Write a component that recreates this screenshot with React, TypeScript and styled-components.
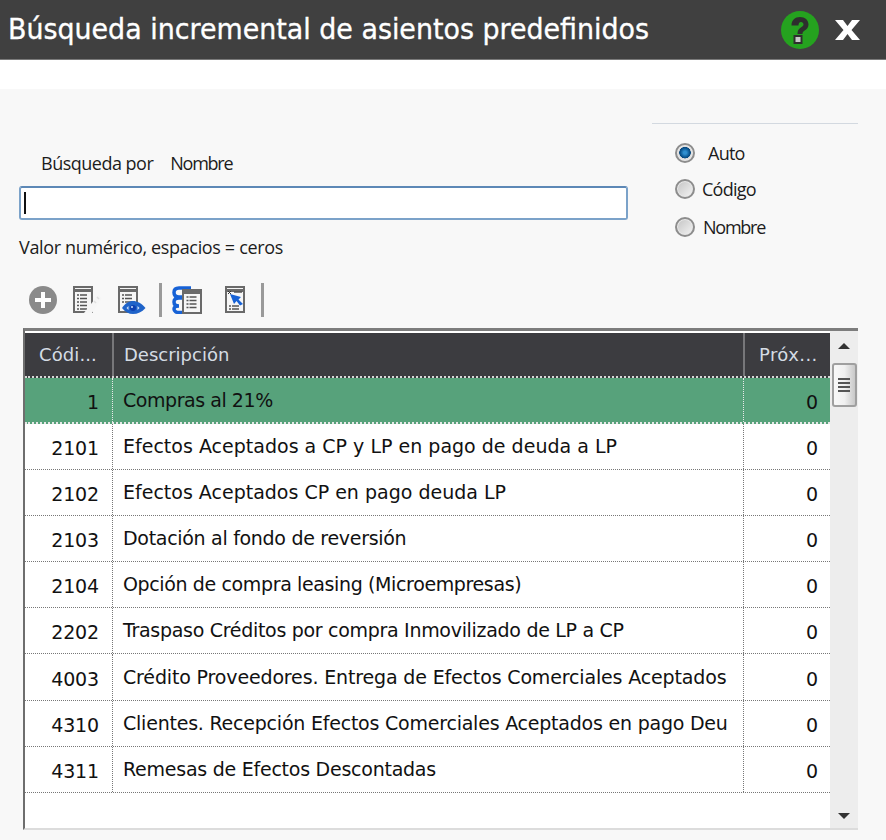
import React from 'react';
import styled, { createGlobalStyle } from 'styled-components';

const Global = createGlobalStyle`
  html, body { margin: 0; padding: 0; background: #fff; }
  * { box-sizing: border-box; }
  #root { width: 886px; height: 840px; overflow: hidden; }
`;

const Page = styled.div`
  width: 886px;
  height: 840px;
  display: flex;
  flex-direction: column;
  background: #fff;
`;

const TitleBar = styled.header`
  height: 60px;
  flex: none;
  display: flex;
  align-items: center;
  justify-content: space-between;
  padding: 0 26px 0 8px;
  background: #404040;
  border-bottom: 1px solid #7a7a7a;
`;

const Title = styled.h1`
  margin: 0;
  padding-top: 1px;
  font: 400 28px/1 "DejaVu Sans", sans-serif;
  -webkit-text-stroke: 0.35px #fff;
  color: #fff;
  transform: scaleX(0.96);
  transform-origin: left center;
  white-space: nowrap;
`;

const TitleActions = styled.div`
  display: flex;
  align-items: center;
  gap: 16px;
`;

const Panel = styled.main`
  margin-top: 29px;
  flex: 1;
  background: #f8f8f8;
  padding: 34px 28px 0 19px;
  display: flex;
  flex-direction: column;
`;

const TopRow = styled.section`
  display: flex;
  justify-content: space-between;
  height: 165px;
`;

const SearchColumn = styled.div`
  width: 609px;
  padding-top: 29px;
`;

const SearchLabels = styled.div`
  display: flex;
  gap: 17px;
  padding-left: 22px;
  height: 22px;
  align-items: center;
`;

const Label = styled.span<{ $ls?: number }>`
  font: 400 18px/22px "Open Sans", sans-serif;
  letter-spacing: ${(p) => p.$ls ?? -0.75}px;
  color: #1c1c1c;
  white-space: nowrap;
`;

const SearchBox = styled.div`
  margin-top: 12px;
  height: 34px;
  background: #fff;
  border: 2px solid #7ba2c9;
  border-top-color: #5d88b6;
  border-radius: 3px;
  display: flex;
  align-items: center;
  padding-left: 3px;
`;

const Caret = styled.span`
  width: 2px;
  height: 22px;
  background: #111;
`;

const Hint = styled(Label)`
  display: block;
  margin-top: 16px;
`;

const ModeGroup = styled.fieldset`
  margin: 0;
  padding: 17px 0 0 23px;
  width: 206px;
  border: 0;
  border-top: 1px solid #d3d9e0;
  display: flex;
  flex-direction: column;
`;

const ModeOption = styled.label<{ $gap: number; $after: number }>`
  display: flex;
  align-items: center;
  gap: ${(p) => p.$gap}px;
  height: 24px;
  margin-bottom: ${(p) => p.$after}px;
`;

const RadioDot = styled.span<{ $checked?: boolean }>`
  width: 20px;
  height: 20px;
  flex: none;
  border-radius: 50%;
  border: 2px solid #8d8d8d;
  box-shadow: inset 0 0 0 1px #e8e8e8;
  background: ${(p) =>
    p.$checked
      ? 'radial-gradient(circle at 50% 48%, #2f8fd0 0 1.5px, #0a5590 4.5px, #0a4a80 5.5px, #dcdcdc 6px, #f0f0f0 100%)'
      : 'linear-gradient(135deg, #c4c4c4, #f4f4f4)'};
`;

const Toolbar = styled.div`
  height: 40px;
  margin-top: -8px;
  padding-left: 10px;
  display: flex;
  align-items: center;
`;

const ToolIcon = styled.span<{ $w: number }>`
  width: ${(p) => p.$w}px;
  height: 34px;
  display: flex;
  align-items: center;
  justify-content: center;
  flex: none;
  & > svg { flex: none; }
`;

const ToolDivider = styled.span`
  width: 3px;
  height: 34px;
  background: #9a9a9a;
  flex: none;
`;

const GridFrame = styled.div`
  margin: 8px 0 0 4px;
  width: 835px;
  height: 502px;
  display: flex;
  border: 2px solid #6e6e6e;
  border-top: 3px solid #7d7d7d;
  border-right: 0;
  border-bottom: 2px solid #dcdcdc;
  background: #fff;
`;

const GridBody = styled.div`
  flex: 1;
  min-width: 0;
`;

const columns = '87px 631px 87px';

const HeaderRow = styled.div`
  display: grid;
  grid-template-columns: ${columns};
  height: 45px;
  margin-top: 2px;
  background: #3c3c40;
  border-bottom: 2px dotted #d8d8d8;
`;

const HeaderCell = styled.div<{ $wide?: boolean; $ls?: number }>`
  font: 400 18px/44px "DejaVu Sans", sans-serif;
  letter-spacing: ${(p) => p.$ls ?? 0}px;
  color: #d5dce4;
  padding-left: ${(p) => (p.$wide ? 14 : 10)}px;
  white-space: nowrap;
  overflow: hidden;
  & + & { border-left: 2px solid #77777a; }
`;

const Row = styled.div<{ $selected?: boolean; $height: number }>`
  --line: ${(p) => (p.$selected ? '#e8e8e8' : '#777')};
  display: grid;
  grid-template-columns: ${columns};
  height: ${(p) => p.$height}px;
  background: ${(p) => (p.$selected ? '#57a27b' : '#fff')};
  border-bottom: ${(p) => (p.$selected ? 2 : 1)}px dotted var(--line);
`;

const Cell = styled.div`
  font: 400 19px/1 "DejaVu Sans", sans-serif;
  letter-spacing: -0.15px;
  color: #111;
  white-space: nowrap;
  overflow: hidden;
  display: flex;
  align-items: center;
  & + & { border-left: 1px dotted var(--line); }
`;

const CodeCell = styled(Cell)`
  justify-content: flex-end;
  padding: 4px 13px 0 0;
`;

const DescCell = styled(Cell)<{ $ls: number }>`
  padding: 0 0 0 10px;
  letter-spacing: ${(p) => p.$ls}px;
`;

const NextCell = styled(Cell)`
  justify-content: flex-end;
  padding: 4px 12px 0 0;
`;

const ScrollBar = styled.aside`
  width: 28px;
  flex: none;
  background: #ededed;
  display: flex;
  flex-direction: column;
  align-items: center;
`;

const ScrollArrow = styled.span<{ $down?: boolean }>`
  margin-top: ${(p) => (p.$down ? 'auto' : '12px')};
  margin-bottom: ${(p) => (p.$down ? '9px' : '0')};
  width: 0;
  height: 0;
  border-left: 6px solid transparent;
  border-right: 6px solid transparent;
  ${(p) => (p.$down ? 'border-top: 6px solid #333;' : 'border-bottom: 6px solid #333;')}
`;

const Thumb = styled.span`
  margin-top: 14px;
  width: 25px;
  height: 44px;
  border: 2px solid #9f9f9f;
  border-radius: 3px;
  background: linear-gradient(90deg, #f8f8f8, #f0f0f0 50%, #c8c8c8);
  display: flex;
  flex-direction: column;
  align-items: center;
  justify-content: center;
  gap: 2px;
`;

const ThumbLine = styled.span`
  width: 12px;
  height: 2px;
  background: #555;
`;

const HelpIcon = () => (
  <svg width="38" height="38" viewBox="0 0 38 38">
    <circle cx="19" cy="19" r="19" fill="#25a21f" />
    <path d="M10.500 14.500C10.500 9 14 6 19 6s8.500 3 8.500 7.500c0 3.200-1.800 4.800-3.800 6-1.500.9-2.200 1.700-2.200 3.500h-5c0-3.600 1-5 3.300-6.500 1.700-1.100 2.700-1.700 2.700-3 0-1.600-1.100-2.500-2.500-2.500-1.700 0-2.500 1.200-2.500 3.500z" fill="#2e2e2e" />
    <rect x="13.500" y="25" width="7" height="7" fill="#c9c9c9" stroke="#2e2e2e" strokeWidth="2" />
  </svg>
);

const CloseIcon = () => (
  <svg width="25" height="20" viewBox="0 0 25 20">
    <path d="M0 0h8l4.500 6L17 0h8l-8.500 10L25 20h-8l-4.500-6L8 20H0l8.500-10z" fill="#fff" />
  </svg>
);

const SheetLines = () => (
  <>
    <rect x="1" y="1" width="18" height="25" fill="#f6f6f6" stroke="#6a6a6a" strokeWidth="2" />
    <rect x="1" y="3" width="18" height="3" fill="#6a6a6a" />
  </>
);

const rowsOf = (x: number, ys: number[]) =>
  ys.map((y) => <path key={y} d={`M${x} ${y}h2M${x + 3} ${y}h7`} stroke="#555" strokeWidth="1.500" />);

const AddIcon = () => (
  <svg width="28" height="28" viewBox="0 0 28 28">
    <circle cx="14" cy="14" r="14" fill="#8a8a8a" />
    <path d="M14 6v16M6 14h16" stroke="#fff" strokeWidth="4" />
  </svg>
);

const EditSheetIcon = () => (
  <svg width="30" height="28" viewBox="0 0 30 28">
    <SheetLines />
    {rowsOf(4, [9, 12.500, 16, 19.500, 23])}
    <path d="M11 27 L25 9 L29 12 L19 27z" fill="#f6f6f6" />
    <path d="M24 11l2 2M21 15l2 2" stroke="#e0e0e0" strokeWidth="1.500" />
  </svg>
);

const ViewSheetIcon = () => (
  <svg width="28" height="28" viewBox="0 0 28 28">
    <SheetLines />
    {rowsOf(4, [9, 12.500, 16])}
    <path d="M4 22c3.500-5 7-7 11-7s9 2.500 12.500 7c-3.500 4-8 6-12.500 6s-7.500-2-11-6z" fill="#1f63c9" />
    <path d="M8.500 22l2-2v4zM21.500 22l-2-2v4z" fill="#cfe0f7" />
    <circle cx="15" cy="22" r="3" fill="#0d3fb0" />
    <circle cx="14" cy="21" r="1" fill="#cfe0f7" />
  </svg>
);

const LinkedSheetIcon = () => (
  <svg width="30" height="28" viewBox="0 0 30 28">
    <path d="M19 2H7C3.500 2 2 4 2 6.500S3.500 11 7 11h4M11 12H7c-3.500 0-5 1.500-5 4s1.500 4 5 4M7 20c-3 0-5 1-5 3s2 3.500 5 3.500h5" fill="none" stroke="#1762d6" strokeWidth="3.500" />
    <rect x="11" y="4" width="18" height="23" fill="#f6f6f6" stroke="#6a6a6a" strokeWidth="2" />
    <rect x="11" y="5" width="18" height="3" fill="#6a6a6a" />
    {rowsOf(14.500, [11, 14.500, 18, 21.500])}
  </svg>
);

const PointerSheetIcon = () => (
  <svg width="20" height="28" viewBox="0 0 20 28">
    <SheetLines />
    <path d="M9 6h8" stroke="#555" strokeWidth="1.500" />
    <path d="M3 5l3 3M6 5L3 8" stroke="#333" strokeWidth="1" />
    <path d="M5 8 L16 11 L13.500 13.500 L18 18 L15 19.500 L11.500 15 L9 18z" fill="#1762d6" />
    {rowsOf(4, [20, 23])}
  </svg>
);

const rows: { code: string; desc: string; ls: number }[] = [
  { code: '1', desc: 'Compras al 21%', ls: -0.45 },
  { code: '2101', desc: 'Efectos Aceptados a CP y LP en pago de deuda a LP', ls: 0.01 },
  { code: '2102', desc: 'Efectos Aceptados CP en pago deuda LP', ls: 0 },
  { code: '2103', desc: 'Dotación al fondo de reversión', ls: -0.3 },
  { code: '2104', desc: 'Opción de compra leasing (Microempresas)', ls: -0.37 },
  { code: '2202', desc: 'Traspaso Créditos por compra Inmovilizado de LP a CP', ls: -0.3 },
  { code: '4003', desc: 'Crédito Proveedores. Entrega de Efectos Comerciales Aceptados', ls: -0.15 },
  { code: '4310', desc: 'Clientes. Recepción Efectos Comerciales Aceptados en pago Deu', ls: -0.22 },
  { code: '4311', desc: 'Remesas de Efectos Descontadas', ls: -0.25 },
];

export default function App() {
  return (
    <Page>
      <Global />
      <TitleBar>
        <Title>Búsqueda incremental de asientos predefinidos</Title>
        <TitleActions>
          <HelpIcon />
          <CloseIcon />
        </TitleActions>
      </TitleBar>
      <Panel>
        <TopRow>
          <SearchColumn>
            <SearchLabels>
              <Label $ls={-0.5}>Búsqueda por</Label>
              <Label $ls={-1.25}>Nombre</Label>
            </SearchLabels>
            <SearchBox>
              <Caret />
            </SearchBox>
            <Hint $ls={-0.35}>Valor numérico, espacios = ceros</Hint>
          </SearchColumn>
          <ModeGroup>
            <ModeOption $gap={13} $after={12}>
              <RadioDot $checked />
              <Label>Auto</Label>
            </ModeOption>
            <ModeOption $gap={7} $after={14}>
              <RadioDot />
              <Label>Código</Label>
            </ModeOption>
            <ModeOption $gap={8} $after={0}>
              <RadioDot />
              <Label $ls={-1.25}>Nombre</Label>
            </ModeOption>
          </ModeGroup>
        </TopRow>
        <Toolbar>
          <ToolIcon $w={27}><AddIcon /></ToolIcon>
          <ToolIcon $w={64}><EditSheetIcon /></ToolIcon>
          <ToolIcon $w={24}><ViewSheetIcon /></ToolIcon>
          <ToolIcon $w={15} />
          <ToolDivider />
          <ToolIcon $w={50}><LinkedSheetIcon /></ToolIcon>
          <ToolIcon $w={46}><PointerSheetIcon /></ToolIcon>
          <ToolIcon $w={3} />
          <ToolDivider />
        </Toolbar>
        <GridFrame>
          <GridBody>
            <HeaderRow>
              <HeaderCell $wide $ls={0.1}>Códi...</HeaderCell>
              <HeaderCell>Descripción</HeaderCell>
              <HeaderCell $wide $ls={0.4}>Próx...</HeaderCell>
            </HeaderRow>
            {rows.map(({ code, desc, ls }, i) => (
              <Row key={code} $selected={i === 0} $height={i === 6 ? 47 : 46}>
                <CodeCell>{code}</CodeCell>
                <DescCell $ls={ls}>{desc}</DescCell>
                <NextCell>0</NextCell>
              </Row>
            ))}
          </GridBody>
          <ScrollBar>
            <ScrollArrow />
            <Thumb>
              <ThumbLine />
              <ThumbLine />
              <ThumbLine />
              <ThumbLine />
            </Thumb>
            <ScrollArrow $down />
          </ScrollBar>
        </GridFrame>
      </Panel>
    </Page>
  );
}
